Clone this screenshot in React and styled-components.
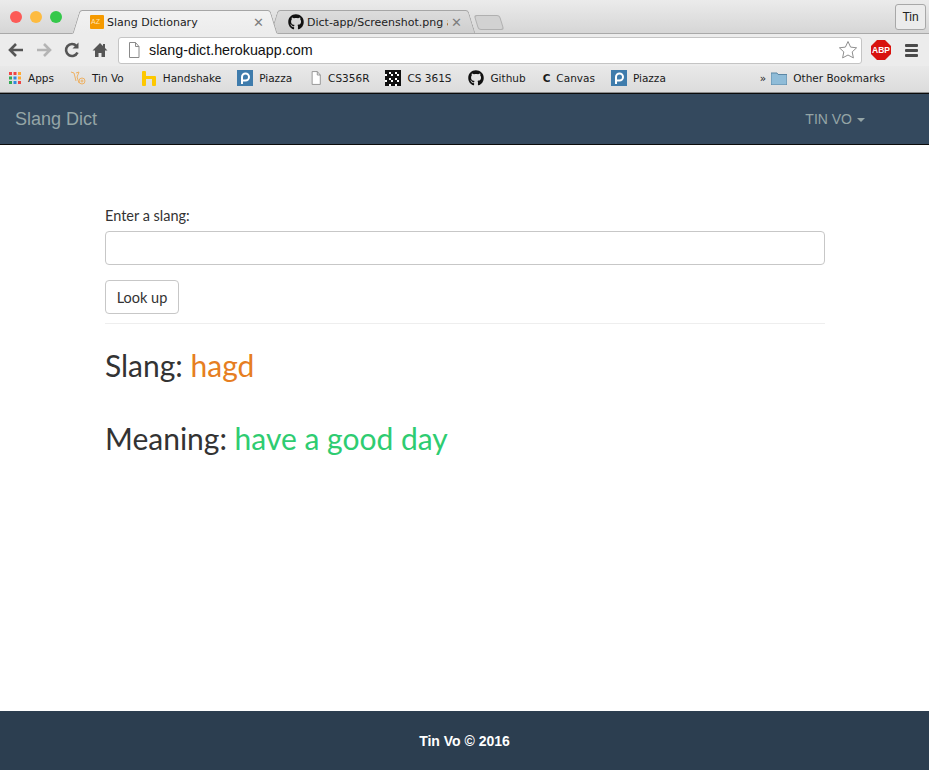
import React from 'react'
import styled, { createGlobalStyle } from 'styled-components'
import { FaGithub } from 'react-icons/fa'

const GlobalStyle = createGlobalStyle`
  html, body { margin: 0; padding: 0; background: #fff; }
  body { font-family: Lato, "Liberation Sans", sans-serif; color: #2c3e50; }
  * { box-sizing: border-box; }
`

const Page = styled.div`
  width: 929px;
  height: 770px;
  display: flex;
  flex-direction: column;
  overflow: hidden;
`

const Chrome = styled.div`
  height: 93px;
  flex: none;
  background: #e4e4e4;
  display: flex;
  flex-direction: column;
`

const TabStrip = styled.div`
  height: 34px;
  flex: none;
  padding: 0 10px 0 10px;
  display: flex;
  align-items: flex-end;
  background: linear-gradient(#ebebeb, #d6d6d6);
  border-bottom: 1px solid #a9a9a9;
`

const Lights = styled.div`
  display: flex;
  gap: 8px;
  width: 66px;
  flex: none;
  align-self: flex-start;
  padding-top: 11px;
`

const Light = styled.span`
  width: 12px;
  height: 12px;
  border-radius: 50%;
  background: ${p => p.$color};
`

const Tab = styled.div`
  position: relative;
  width: ${p => p.$width}px;
  height: 24px;
  margin-bottom: -1px;
  margin-right: ${p => p.$gap || 0}px;
  padding: 0 10px 0 14px;
  display: flex;
  align-items: center;
  gap: 3px;
  z-index: ${p => (p.$active ? 2 : 1)};
  font: 11px "DejaVu Sans", sans-serif;
  color: #1c1c1c;
  white-space: nowrap;

  &::before, &::after {
    content: '';
    position: absolute;
    top: 0;
    bottom: 0;
    width: 60%;
    z-index: -1;
    border-top: 1px solid #a6a6a6;
    background: ${p => (p.$active ? 'linear-gradient(#f2f2f2, #ececec)' : 'linear-gradient(#dcdcdc, #cfcfcf)')};
    border-bottom: ${p => (p.$active ? '1px solid #ececec' : '1px solid #a9a9a9')};
  }
  &::before {
    left: 0;
    border-left: 1px solid #a6a6a6;
    border-top-left-radius: 3px;
    transform: skewX(-17deg);
  }
  &::after {
    right: 0;
    border-right: 1px solid #a6a6a6;
    border-top-right-radius: 3px;
    transform: skewX(17deg);
  }
`

const TabTitle = styled.span`
  flex: 1;
  overflow: hidden;
  letter-spacing: ${p => p.$spacing || 0}px;
  color: ${p => p.$color || '#1c1c1c'};
`

const TabClose = styled.span`
  font: 13px "Liberation Sans", sans-serif;
  color: #7d7d7d;
`

const NewTab = styled.div`
  width: 26px;
  height: 15px;
  margin-left: 4px;
  margin-bottom: 3px;
  background: #d2d2d2;
  border: 1px solid #b0b0b0;
  border-radius: 3px;
  transform: skewX(17deg);
`

const ProfileButton = styled.div`
  margin-left: auto;
  margin-right: -7px;
  align-self: flex-start;
  margin-top: 4px;
  width: 31px;
  height: 26px;
  border: 1px solid #a8a8a8;
  border-radius: 3px;
  background: #ececec;
  display: flex;
  align-items: center;
  justify-content: center;
  font: 12px "Liberation Sans", sans-serif;
  color: #222;
`

const Toolbar = styled.div`
  height: 32px;
  flex: none;
  padding: 0 7px 0 7px;
  display: flex;
  align-items: center;
  background: #ececec;
`

const NavIcon = styled.svg`
  width: 18px;
  height: 18px;
  flex: none;
  margin-right: ${p => p.$gap}px;
`

const Omnibox = styled.div`
  width: 744px;
  height: 27px;
  margin-left: 1px;
  flex: none;
  padding: 0 3px 0 8px;
  display: flex;
  align-items: center;
  background: #fff;
  border: 1px solid #c4c4c4;
  border-radius: 3px;
  font: 14.3px "Liberation Sans", sans-serif;
  color: #111;
`

const Url = styled.span`
  flex: 1;
  margin-left: 8px;
`

const Bookmarks = styled.div`
  height: 27px;
  flex: none;
  padding: 0 9px 3px 8px;
  display: flex;
  align-items: center;
  background: linear-gradient(#e9e9e9, #dcdcdc);
  border-bottom: 1px solid #8c8c8c;
  font: 10.5px "DejaVu Sans", sans-serif;
  color: #1a1a1a;
`

const Bookmark = styled.div`
  display: flex;
  align-items: center;
  gap: ${p => p.$gap || 6}px;
  margin-right: ${p => p.$right}px;
  white-space: nowrap;
`

const PiazzaIcon = styled.span`
  width: 16px;
  height: 16px;
  flex: none;
  background: #3f7cac;
  color: #fff;
  display: flex;
  align-items: center;
  justify-content: center;
`

const Navbar = styled.nav`
  height: 52px;
  flex: none;
  padding: 0 64px 0 15px;
  display: flex;
  align-items: center;
  justify-content: space-between;
  background: #34495e;
  border-top: 1px solid #0b0b0b;
  border-bottom: 1px solid #0b0b0b;
  color: #95a5a6;
  font-family: "Liberation Sans", sans-serif;
`

const Brand = styled.div`
  font-size: 18px;
`

const UserMenu = styled.div`
  font-size: 14px;
  display: flex;
  align-items: center;
  gap: 5px;
`

const Caret = styled.span`
  width: 0;
  height: 0;
  border-top: 4px solid #95a5a6;
  border-left: 4px solid transparent;
  border-right: 4px solid transparent;
  margin-top: 2px;
`

const Main = styled.main`
  flex: 1;
  width: 720px;
  margin-left: 105px;
  padding-top: 61px;
  color: #333;
`

const Label = styled.label`
  display: block;
  font-size: 14.5px;
  line-height: 20px;
  margin-bottom: 5px;
`

const Input = styled.input`
  display: block;
  width: 100%;
  height: 34px;
  background: #fff;
  border: 1px solid #c7c7c7;
  border-radius: 4px;
  margin-bottom: 15px;
`

const Button = styled.button`
  display: block;
  width: 74px;
  height: 34px;
  padding: 0;
  background: #fff;
  border: 1px solid #c7c7c7;
  border-radius: 4px;
  font: 14.5px Lato, sans-serif;
  color: #333;
`

const Rule = styled.hr`
  margin: 9px 0 0;
  border: 0;
  border-top: 1px solid #eee;
`

const Result = styled.h3`
  margin: ${p => p.$top}px 0 0;
  font-size: 30px;
  font-weight: 400;
  line-height: 33px;
  color: #333;
`

const Value = styled.span`
  color: ${p => p.$color};
`

const Footer = styled.footer`
  height: 59px;
  flex: none;
  display: flex;
  align-items: center;
  justify-content: center;
  background: #2c3e50;
  color: #fff;
  font: bold 14px "Liberation Sans", sans-serif;
`

const AzIcon = () => (
  <svg width="14" height="14" viewBox="0 0 14 14">
    <rect width="14" height="14" rx="1" fill="#f59a00" />
    <text x="1" y="9" fontSize="7" fontFamily="Liberation Sans" fill="#ffe3b0">AZ</text>
  </svg>
)

const AppsIcon = () => (
  <svg width="14" height="14" viewBox="0 0 14 14">
    {['#e44', '#e44', '#fa3', '#3a5', '#38d', '#fa3', '#3a5', '#38d', '#e44'].map((c, i) => (
      <rect key={i} x={1 + (i % 3) * 4.5} y={1 + Math.floor(i / 3) * 4.5} width="3" height="3" fill={c} />
    ))}
  </svg>
)

const QrIcon = () => {
  const cells = []
  for (let y = 0; y < 8; y++) {
    for (let x = 0; x < 8; x++) {
      if ((x * 3 + y * 5 + x * y) % 3 !== 1) cells.push(<rect key={x + '-' + y} x={x * 2} y={y * 2} width="2" height="2" fill="#111" />)
    }
  }
  return <svg width="16" height="16" viewBox="0 0 16 16"><rect width="16" height="16" fill="#fff" />{cells}</svg>
}

const FileIcon = ({ size = 14 }) => (
  <svg width={size} height={size + 2} viewBox="0 0 14 16" fill="#fff" stroke="#8a8a8a">
    <path d="M2.5 .5h6l3.5 4v11h-9.500z" />
    <path d="M8.500 .5v4h3.500" fill="none" />
  </svg>
)

const TinVoIcon = () => (
  <svg width="16" height="16" viewBox="0 0 16 16" fill="none" stroke="#eeb163" strokeWidth="1">
    <path d="M1 2l3 1 2 8M6 3l3-1-2 5 2 6" />
    <circle cx="12" cy="11" r="3" />
    <circle cx="12" cy="11" r="1" />
  </svg>
)

const HandshakeIcon = () => (
  <svg width="16" height="16" viewBox="0 0 16 16" fill="#fdc800">
    <rect x="1" y="1" width="4" height="15" rx="1" />
    <rect x="11" y="6" width="4" height="10" rx="1" />
    <rect x="4" y="6" width="8" height="3" />
  </svg>
)

const PiazzaGlyph = () => (
  <PiazzaIcon>
    <svg width="12" height="14" viewBox="0 0 12 14" fill="none" stroke="#fff" strokeWidth="2">
      <path d="M3 13V6a3.500 3.500 0 1 1 3.500 3.500H4" />
    </svg>
  </PiazzaIcon>
)

const App = () => (
  <Page>
    <GlobalStyle />
    <Chrome>
      <TabStrip>
        <Lights>
          <Light $color="#fc5b57" />
          <Light $color="#fdbb40" />
          <Light $color="#34c84a" />
        </Lights>
        <Tab $active $width={198}>
          <AzIcon />
          <TabTitle>Slang Dictionary</TabTitle>
          <TabClose>✕</TabClose>
        </Tab>
        <Tab $width={198}>
          <FaGithub size={16} color="#111" />
          <TabTitle $color="#222">Dict-app/Screenshot.png a</TabTitle>
          <TabClose>✕</TabClose>
        </Tab>
        <NewTab />
        <ProfileButton>Tin</ProfileButton>
      </TabStrip>
      <Toolbar>
        <NavIcon $gap={10} viewBox="0 0 18 18" fill="none" stroke="#555" strokeWidth="2.600">
          <path d="M16 9H3M9 3L3 9l6 6" />
        </NavIcon>
        <NavIcon $gap={10} viewBox="0 0 18 18" fill="none" stroke="#b4b4b4" strokeWidth="2.600">
          <path d="M2 9h13M9 3l6 6-6 6" />
        </NavIcon>
        <NavIcon $gap={10} viewBox="0 0 18 18" fill="none" stroke="#555" strokeWidth="2.600">
          <path d="M14.500 11.500A6 6 0 1 1 13.500 5" />
          <path d="M15.500 1.500v6h-6z" fill="#555" stroke="none" />
        </NavIcon>
        <NavIcon $gap={8} viewBox="0 0 18 18" fill="#555">
          <path d="M9 2L1.500 9.500H4V16h3.500v-4h3v4H14V9.500h2.500L14 7V3h-2v2z" />
        </NavIcon>
        <Omnibox>
          <FileIcon />
          <Url>slang-dict.herokuapp.com</Url>
          <svg width="20" height="20" viewBox="0 0 20 20" fill="#fff" stroke="#8f8f8f">
            <path d="M10 1.500l2.600 5.600 6 .7-4.400 4.100 1.200 6L10 15l-5.400 2.900 1.200-6-4.400-4.100 6-.7z" />
          </svg>
        </Omnibox>
        <svg width="20" height="20" viewBox="0 0 20 20" style={{ marginLeft: 9 }}>
          <path d="M6 0h8l6 6v8l-6 6H6l-6-6V6z" fill="#d8120e" />
          <text x="10" y="13" fontSize="8.500" fontWeight="700" fontFamily="Liberation Sans" textAnchor="middle" fill="#fff">ABP</text>
        </svg>
        <svg width="14" height="14" viewBox="0 0 14 14" fill="#4a4a4a" style={{ marginLeft: 14 }}>
          <rect y="1" width="13" height="3" rx="1" />
          <rect y="6" width="13" height="3" rx="1" />
          <rect y="11" width="13" height="3" rx="1" />
        </svg>
      </Toolbar>
      <Bookmarks>
        <Bookmark $right={16}><AppsIcon />Apps</Bookmark>
        <Bookmark $right={17}><TinVoIcon />Tin Vo</Bookmark>
        <Bookmark $right={16}><HandshakeIcon />Handshake</Bookmark>
        <Bookmark $right={18}><PiazzaGlyph />Piazza</Bookmark>
        <Bookmark $right={16}><FileIcon size={12} />CS356R</Bookmark>
        <Bookmark $right={17}><QrIcon />CS 361S</Bookmark>
        <Bookmark $right={17}><FaGithub size={16} color="#111" />Github</Bookmark>
        <Bookmark $right={16}><b>C</b>Canvas</Bookmark>
        <Bookmark $right={94}><PiazzaGlyph />Piazza</Bookmark>
        <Bookmark $right={5}>»</Bookmark>
        <Bookmark>
          <svg width="16" height="14" viewBox="0 0 16 14">
            <path d="M0 2h6l1 1.500h9V14H0z" fill="#8fbcd8" stroke="#5b87a5" />
          </svg>
          Other Bookmarks
        </Bookmark>
      </Bookmarks>
    </Chrome>
    <Navbar>
      <Brand>Slang Dict</Brand>
      <UserMenu>TIN VO <Caret /></UserMenu>
    </Navbar>
    <Main>
      <Label>Enter a slang:</Label>
      <Input />
      <Button>Look up</Button>
      <Rule />
      <Result $top={25}>Slang: <Value $color="#e67e22">hagd</Value></Result>
      <Result $top={40}>Meaning: <Value $color="#2ecc71">have a good day</Value></Result>
    </Main>
    <Footer>Tin Vo © 2016</Footer>
  </Page>
)

export default App
